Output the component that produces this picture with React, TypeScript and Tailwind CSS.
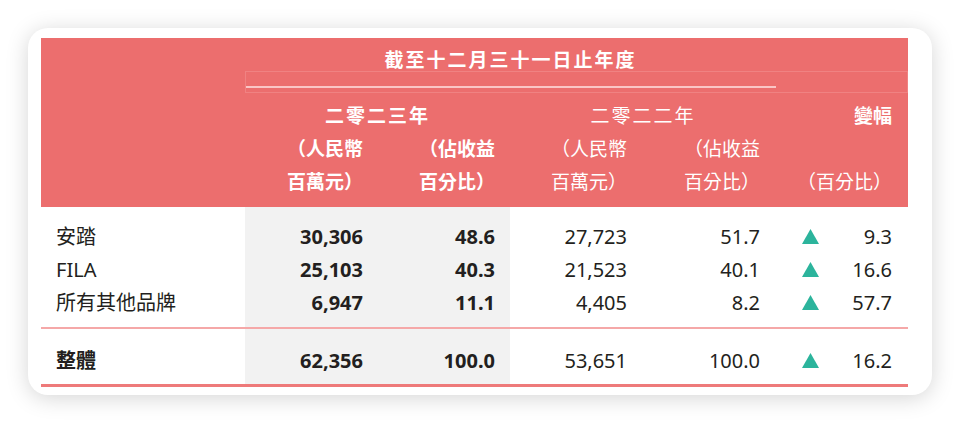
const rows = [
  { name: "安踏", a: "30,306", b: "48.6", c: "27,723", d: "51.7", e: "9.3" },
  { name: "FILA", a: "25,103", b: "40.3", c: "21,523", d: "40.1", e: "16.6" },
  { name: "所有其他品牌", a: "6,947", b: "11.1", c: "4,405", d: "8.2", e: "57.7" },
]

function Up() {
  return (
    <svg width="17" height="15" viewBox="0 0 17 15" className="shrink-0">
      <polygon points="8.5,0 17,15 0,15" fill="#2CB49C" />
    </svg>
  )
}

export default function App() {
  const cols = "grid grid-cols-[204px_133px_132px_132px_134px_132px]"
  const last = "pt-[15px] pb-[7px] border-b-[3px] border-[#EE7A7A]"
  return (
    <div className="w-[960px] h-[423px] bg-white pt-[28px] pl-[28px] font-['Noto_Sans','Noto_Sans_CJK_TC',sans-serif] text-[#231F20]">
      <div className="w-[904px] h-[367px] rounded-[20px] bg-white shadow-[0_3px_22px_rgba(0,0,0,0.17)] pt-[10px] pl-[13px]">
        <div className="w-[867px]">
          {/* header */}
          <div className="bg-[#EC6E6E] h-[169px] text-white text-[19px]">
            <div className={cols}>
              <div className="col-start-2 col-span-4 h-[33px] flex items-end justify-center pb-[1px] leading-[19px] font-bold tracking-[2px]">
                截至十二月三十一日止年度
              </div>
            </div>
            <div className={cols}>
              <div className="col-start-2 col-span-5 h-[22px] border border-[#F08282]">
                <div className="mt-[14px] h-[2px] w-[530px] bg-[#FAC6C6]" />
              </div>
            </div>
            <div className={cols + " mt-[7px] h-[33px] items-center leading-[33px]"}>
              <div className="col-start-2 col-span-2 text-center font-bold tracking-[2px]">二零二三年</div>
              <div className="col-span-2 text-center tracking-[2px]">二零二二年</div>
              <div className="text-right pr-[16px] font-bold">變幅</div>
            </div>
            <div className={cols + " h-[33px] items-center leading-[33px]"}>
              <div className="col-start-2 text-right pr-[15px] font-bold">（人民幣</div>
              <div className="text-right pr-[15px] font-bold">（佔收益</div>
              <div className="text-right pr-[15px]">（人民幣</div>
              <div className="text-right pr-[16px]">（佔收益</div>
              <div />
            </div>
            <div className={cols + " h-[33px] items-center leading-[33px]"}>
              <div className="col-start-2 text-right pr-[15px] font-bold">百萬元）</div>
              <div className="text-right pr-[15px] font-bold">百分比）</div>
              <div className="text-right pr-[15px]">百萬元）</div>
              <div className="text-right pr-[16px]">百分比）</div>
              <div className="text-right pr-[16px]">（百分比）</div>
            </div>
          </div>

          {/* body */}
          <table className="w-[867px] table-fixed border-collapse text-[20px] leading-[33px]">
            <colgroup>
              <col className="w-[204px]" />
              <col className="w-[133px]" />
              <col className="w-[132px]" />
              <col className="w-[132px]" />
              <col className="w-[134px]" />
              <col className="w-[132px]" />
            </colgroup>
            <tbody>
              {rows.map((r, i) => {
                const pad =
                  i === 0
                    ? "pt-[13px]"
                    : i === rows.length - 1
                    ? "pb-[8px] border-b-2 border-[#F5A8A8]"
                    : ""
                return (
                  <tr key={r.name}>
                    <td className={`pl-[15px] ${pad}`}>{r.name}</td>
                    <td className={`text-right pr-[15px] font-bold bg-[#F2F2F2] ${pad}`}>{r.a}</td>
                    <td className={`text-right pr-[15px] font-bold bg-[#F2F2F2] ${pad}`}>{r.b}</td>
                    <td className={`text-right pr-[15px] ${pad}`}>{r.c}</td>
                    <td className={`text-right pr-[16px] ${pad}`}>{r.d}</td>
                    <td className={`pr-[16px] pl-[26px] ${pad}`}>
                      <div className="flex items-center justify-between">
                        <Up />
                        <span>{r.e}</span>
                      </div>
                    </td>
                  </tr>
                )
              })}
              <tr>
                <td className={`pl-[15px] font-bold ${last}`}>整體</td>
                <td className={`text-right pr-[15px] font-bold bg-[#F2F2F2] ${last}`}>62,356</td>
                <td className={`text-right pr-[15px] font-bold bg-[#F2F2F2] ${last}`}>100.0</td>
                <td className={`text-right pr-[15px] ${last}`}>53,651</td>
                <td className={`text-right pr-[16px] ${last}`}>100.0</td>
                <td className={`pr-[16px] pl-[26px] ${last}`}>
                  <div className="flex items-center justify-between">
                    <Up />
                    <span>16.2</span>
                  </div>
                </td>
              </tr>
            </tbody>
          </table>
        </div>
      </div>
    </div>
  )
}
